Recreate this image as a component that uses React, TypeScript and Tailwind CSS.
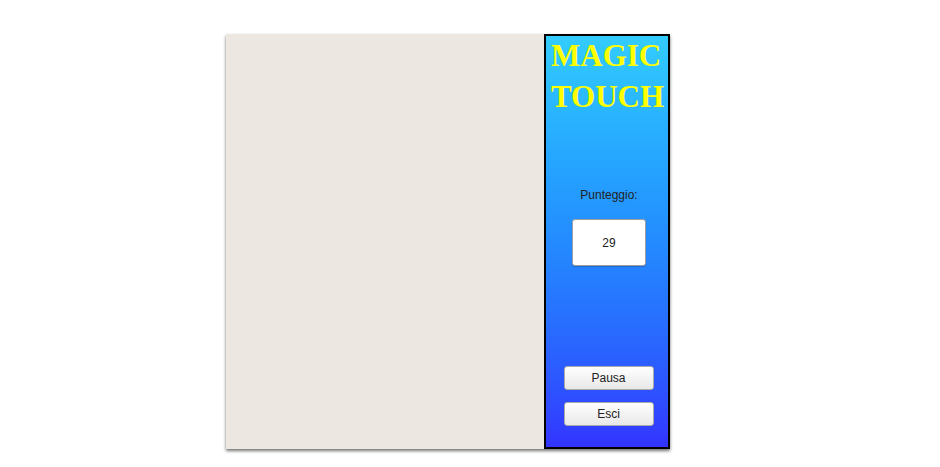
import React from 'react';

const App: React.FC = () => {
  return (
    <div className="w-[940px] h-[467px] bg-white font-['Liberation_Sans',Arial,sans-serif]">
      <div className="pl-[226px] pt-[34px]">
        <div className="flex w-[444px] h-[415px] shadow-[0_2px_3px_rgba(0,0,0,0.55)]">
          <div className="w-[318px] h-full bg-[#ece8e1]"></div>
          <div className="w-[126px] h-full border-2 border-black bg-gradient-to-b from-[#33ccff] to-[#3333ff] flex flex-col">
            <h1 className="pl-[5px] -mt-[1px] font-['Liberation_Serif','Times_New_Roman',serif] font-bold text-[31px] leading-[41px] text-[#ffff00]">
              MAGIC<br />TOUCH
            </h1>
            <p className="mt-[69px] pl-[4px] text-center text-[12px] text-[#222]">Punteggio:</p>
            <div className="ml-[26px] mt-[15px] w-[74px] h-[47px] bg-white border border-[#a0a0a0] rounded-[3px] shadow-[0_1px_1px_rgba(0,0,0,0.2)] flex items-center justify-center text-[12px] text-[#222]">
              29
            </div>
            <div className="mt-auto mb-[21px] flex flex-col items-center gap-[12px] pl-[3px]">
              <button className="w-[90px] h-[24px] rounded-[3px] border border-[#aaa] bg-gradient-to-b from-white to-[#e8e8e8] text-[12px] text-[#222]">
                Pausa
              </button>
              <button className="w-[90px] h-[24px] rounded-[3px] border border-[#aaa] bg-gradient-to-b from-white to-[#e8e8e8] text-[12px] text-[#222]">
                Esci
              </button>
            </div>
          </div>
        </div>
      </div>
    </div>
  );
};

export default App;
